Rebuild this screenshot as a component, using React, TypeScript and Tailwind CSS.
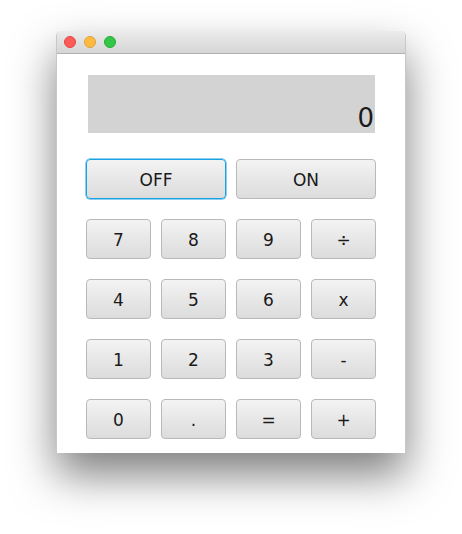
import React from 'react';

const keys = ['7', '8', '9', '÷', '4', '5', '6', 'x', '1', '2', '3', '-', '0', '.', '=', '+'];

const btn =
  'h-10 rounded-[4px] border border-[#b9b9b9] bg-gradient-to-b from-[#f3f3f3] to-[#dcdcdc] text-[17px] leading-none pt-[2px] text-[#1a1a1a]';

const App: React.FC = () => {
  return (
    <div className="w-[462px] h-[534px] bg-white pt-[31px] pl-[56px]" style={{ fontFamily: '"DejaVu Sans", sans-serif' }}>
      <div className="w-[350px] h-[422px] bg-white rounded-t-[5px] shadow-[0_22px_44px_rgba(0,0,0,0.5)] flex flex-col overflow-hidden border-x border-[#c8c8c8]">
        <div className="h-[23px] shrink-0 bg-gradient-to-b from-[#ececec] to-[#d5d5d5] border-b border-[#b1b1b1] flex items-center gap-2 pl-[7px]">
          <span className="w-3 h-3 rounded-full bg-[#fc5b57] border border-[#e2463f]" />
          <span className="w-3 h-3 rounded-full bg-[#fdbb3f] border border-[#e1a13a]" />
          <span className="w-3 h-3 rounded-full bg-[#33c748] border border-[#27aa35]" />
        </div>
        <div className="flex flex-col pl-[29px] pr-[29px] pt-[21px]">
          <div className="h-[58px] ml-[2px] mr-[1px] bg-[#d3d3d3] flex items-end justify-end text-[26px] leading-none text-[#1a1a1a]">
            <span className="pb-[2px] pr-[1px]">0</span>
          </div>
          <div className="grid grid-cols-2 gap-[10px] mt-[26px]">
            <button className={btn + ' !border-[#1ba1e2] border-[1.5px] shadow-[0_0_0_0.5px_#1ba1e2]'}>OFF</button>
            <button className={btn}>ON</button>
          </div>
          <div className="grid grid-cols-4 gap-x-[10px] gap-y-[20px] mt-[20px]">
            {keys.map((k) => (
              <button key={k} className={btn}>
                {k}
              </button>
            ))}
          </div>
        </div>
      </div>
    </div>
  );
};

export default App;
